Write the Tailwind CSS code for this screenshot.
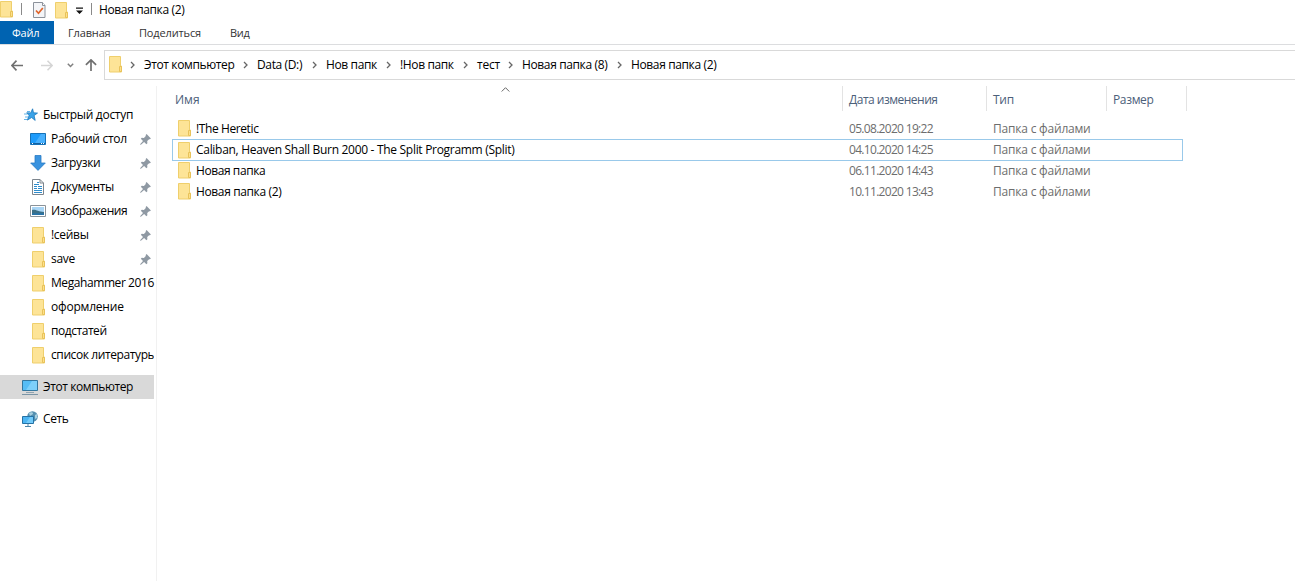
<!DOCTYPE html>
<html lang="ru">
<head>
    <meta charset="UTF-8">
    <meta name="viewport" content="width=device-width, initial-scale=1.0">
    <title>Новая папка (2)</title>
    <script src="https://cdn.jsdelivr.net/npm/@tailwindcss/browser@4"></script>
</head>
<body class="h-screen overflow-hidden bg-white font-['Open_Sans','Noto_Sans',sans-serif] text-[12px] leading-4 text-black flex flex-col whitespace-nowrap">

    <!-- Shared icons -->
    <svg class="hidden">
        <symbol id="folder" viewBox="0 0 14 17">
            <path d="M.5.5h11v9.500h1v6H.5z" fill="#fde497" stroke="#efcf6c"/>
            <path d="M10.500 15.500v-5h2v5z" fill="#fde08a" stroke="#e8c25a"/>
        </symbol>
        <symbol id="pin" viewBox="0 0 11 11">
            <path d="M6.600.1l4.300 4.300-1 .9-.8-.1-1.900 1.900.2 2.200-1 1L4.100 8 .9 10.800l-.7-.1.100-.7L3 7 .8 4.800l1-1 2.100.2 1.900-2-.1-.9z" fill="#8f99a3"/>
        </symbol>
        <symbol id="chevron" viewBox="0 0 5 8">
            <path d="M1 1l3 3-3 3" fill="none" stroke="#666" stroke-width="1.3"/>
        </symbol>
    </svg>

    <!-- Title bar -->
    <div class="h-[21px] shrink-0 flex items-start">
        <svg class="w-[14px] h-[17px] mt-px"><use href="#folder"/></svg>
        <div class="w-px h-3 bg-[#8a8a8a] ml-[7px] mt-[3px]"></div>
        <svg class="w-[13px] h-[16px] ml-[11px] mt-[2px]" viewBox="0 0 13 16">
            <path d="M.5.5h9l2.500 3v12H.5z" fill="#f4f5f8" stroke="#8c929b"/>
            <path d="M9.500.5v3H12" fill="#fff" stroke="#8c929b"/>
            <path d="M3 8.500l2.500 2.800L9.800 6" fill="none" stroke="#e0652b" stroke-width="1.700"/>
        </svg>
        <svg class="w-[14px] h-[17px] ml-[9px] mt-[2px]"><use href="#folder"/></svg>
        <svg class="w-[7px] h-[7px] ml-[7px] mt-[7px]" viewBox="0 0 7 7">
            <path d="M0 0.500h7v1.300H0zM0 3.500h7L3.500 7z" fill="#111"/>
        </svg>
        <div class="w-px h-3 bg-[#8a8a8a] ml-2 mt-[3px]"></div>
        <span class="ml-[7px] mt-[2px] tracking-[-0.37px]">Новая папка (2)</span>
    </div>

    <!-- Ribbon tabs -->
    <div class="h-6 shrink-0 flex items-center border-b border-[#dcdddf] text-[11px] text-[#333]">
        <div class="w-[54px] h-[23px] bg-[#0063b1] text-white flex items-center pl-3 tracking-[-0.2px]">Файл</div>
        <span class="w-[71px] ml-[14px] tracking-[-0.15px]">Главная</span>
        <span class="w-[91px] tracking-[-0.15px]">Поделиться</span>
        <span class="tracking-[-0.3px]">Вид</span>
    </div>

    <!-- Address row -->
    <div class="h-[35px] shrink-0 flex pt-[5px]">
        <div class="w-[104px] flex items-center">
            <svg class="w-3 h-[11px] ml-[11px]" viewBox="0 0 12 11">
                <path d="M5.500.7L.9 5.500l4.600 4.800M1 5.500h11" fill="none" stroke="#707070" stroke-width="1.700"/>
            </svg>
            <svg class="w-3 h-[11px] ml-[18px]" viewBox="0 0 12 11">
                <path d="M6.500.7l4.600 4.800-4.600 4.800M11 5.500H0" fill="none" stroke="#d5d5d5" stroke-width="1.500"/>
            </svg>
            <svg class="w-[7px] h-[5px] ml-[14px]" viewBox="0 0 7 5">
                <path d="M.8.8l2.700 2.700L6.200.8" fill="none" stroke="#808080" stroke-width="1.500"/>
            </svg>
            <svg class="w-3 h-3 ml-[11px]" viewBox="0 0 12 12">
                <path d="M.9 5.900L6 .9l5.100 5M6 1v11" fill="none" stroke="#707070" stroke-width="1.700"/>
            </svg>
        </div>
        <div class="flex-1 flex items-center border border-r-0 border-[#d9d9d9] tracking-[-0.37px]">
            <svg class="w-[14px] h-[17px] ml-1 mb-px"><use href="#folder"/></svg>
            <svg class="w-[5px] h-2 ml-[7px] mr-[9px]"><use href="#chevron"/></svg>
            <span class="w-[99px]">Этот компьютер</span>
            <svg class="w-[5px] h-2 mr-[9px]"><use href="#chevron"/></svg>
            <span class="w-[55px]">Data (D:)</span>
            <svg class="w-[5px] h-2 mr-[9px]"><use href="#chevron"/></svg>
            <span class="w-[60px]">Нов папк</span>
            <svg class="w-[5px] h-2 mr-[9px]"><use href="#chevron"/></svg>
            <span class="w-[63px]">!Нов папк</span>
            <svg class="w-[5px] h-2 mr-[9px]"><use href="#chevron"/></svg>
            <span class="w-[31px] tracking-[-0.2px]">тест</span>
            <svg class="w-[5px] h-2 mr-[9px]"><use href="#chevron"/></svg>
            <span class="w-[95px]">Новая папка (8)</span>
            <svg class="w-[5px] h-2 mr-[9px]"><use href="#chevron"/></svg>
            <span>Новая папка (2)</span>
        </div>
    </div>

    <div class="flex-1 min-h-0 flex pt-[6px]">
        <!-- Navigation pane -->
        <nav class="w-[157px] shrink-0 border-r border-[#f1f1f1] pt-[17px] pr-[2px] tracking-[-0.3px]">
            <div class="h-6 flex items-center pl-[24px] gap-[5px]">
                <svg class="w-[14px] h-[14px]" viewBox="0 0 14 14">
                    <path d="M8.600.8l.9 4 4 .3-3.400 2.500 1.100 4.800-3.600-2.900-4.200 2.600 1.700-4.500-2.400-2.800 4 .1z" fill="#3ba3e8" stroke="#1b78bd" stroke-width=".8"/>
                    <path d="M3 3.500h3M0 6h3M1 9h3M0 11.500h3" stroke="#63b4e8"/>
                </svg>
                <span>Быстрый доступ</span>
            </div>
            <div class="h-6 flex items-center pl-[30px]">
                <svg class="w-4 h-3 mr-[5px]" viewBox="0 0 16 12">
                    <path d="M.5.5h15v11H.5z" fill="#1d9bfb" stroke="#1672b8"/>
                    <path d="M11 1h4v9H5z" fill="#48b0fd"/>
                    <path d="M1 10.500h14" stroke="#135f9e"/>
                    <path d="M2 10.500h1M11 10.500h1M13 10.500h1" stroke="#fff"/>
                </svg>
                <span class="w-[89px]">Рабочий стол</span>
                <svg class="w-[11px] h-[11px]"><use href="#pin"/></svg>
            </div>
            <div class="h-6 flex items-center pl-[30px]">
                <svg class="w-4 h-4 mr-[5px]" viewBox="0 0 16 16">
                    <path d="M5 .5h6V8h4.300L8 15.400.7 8H5z" fill="#3a93df" stroke="#2a7bc4" stroke-width=".8"/>
                </svg>
                <span class="w-[89px]">Загрузки</span>
                <svg class="w-[11px] h-[11px]"><use href="#pin"/></svg>
            </div>
            <div class="h-6 flex items-center pl-[32px]">
                <svg class="w-3 h-4 mr-[7px]" viewBox="0 0 12 16">
                    <path d="M.5.5H8L11.500 4v11.500H.5z" fill="#fff" stroke="#7d858d"/>
                    <path d="M8 .5V4h3.500" fill="none" stroke="#7d858d"/>
                    <path d="M5 3.500h2M2 5.500h5M2 7.500h3M6 7.500h4M2 9.500h3M6 9.500h4M2 11.500h8M2 13.500h8" stroke="#2f8ccc"/>
                </svg>
                <span class="w-[89px]">Документы</span>
                <svg class="w-[11px] h-[11px]"><use href="#pin"/></svg>
            </div>
            <div class="h-6 flex items-center pl-[30px]">
                <svg class="w-4 h-3 mr-[5px]" viewBox="0 0 16 12">
                    <path d="M.5.5h15v11H.5z" fill="#fff" stroke="#8a9299"/>
                    <path d="M2 2h12v8H2z" fill="#a9d5f5"/>
                    <path d="M2 5c4-1 6 2 12 2v3H2z" fill="#3b6f86"/>
                    <path d="M2 8.500c4 0 8-.5 12 0V10H2z" fill="#2873a8"/>
                </svg>
                <span class="w-[89px] tracking-[-0.4px]">Изображения</span>
                <svg class="w-[11px] h-[11px]"><use href="#pin"/></svg>
            </div>
            <div class="h-6 flex items-center pl-[32px]">
                <svg class="w-[14px] h-[17px] mr-[5px]"><use href="#folder"/></svg>
                <span class="w-[89px]">!сейвы</span>
                <svg class="w-[11px] h-[11px]"><use href="#pin"/></svg>
            </div>
            <div class="h-6 flex items-center pl-[32px]">
                <svg class="w-[14px] h-[17px] mr-[5px]"><use href="#folder"/></svg>
                <span class="w-[89px]">save</span>
                <svg class="w-[11px] h-[11px]"><use href="#pin"/></svg>
            </div>
            <div class="h-6 flex items-center pl-[32px]">
                <svg class="w-[14px] h-[17px] mr-[5px] shrink-0"><use href="#folder"/></svg>
                <span class="tracking-[-0.42px]">Megahammer 2016</span>
            </div>
            <div class="h-6 flex items-center pl-[32px]">
                <svg class="w-[14px] h-[17px] mr-[5px]"><use href="#folder"/></svg>
                <span class="tracking-[-0.2px]">оформление</span>
            </div>
            <div class="h-6 flex items-center pl-[32px]">
                <svg class="w-[14px] h-[17px] mr-[5px]"><use href="#folder"/></svg>
                <span class="tracking-[-0.45px]">подстатей</span>
            </div>
            <div class="h-6 flex items-center pl-[32px]">
                <svg class="w-[14px] h-[17px] mr-[5px] shrink-0"><use href="#folder"/></svg>
                <span class="w-[103px] overflow-hidden tracking-[-0.4px]">список литературы</span>
            </div>
            <div class="h-6 mt-2 flex items-center pl-[22px] bg-[#d9d9d9]">
                <svg class="w-4 h-[15px] mr-[5px]" viewBox="0 0 16 15">
                    <path d="M.5.500h15v10H.5z" fill="#56bdf5" stroke="#33779f"/>
                    <path d="M10 1h5v9H4z" fill="#7dd0fa"/>
                    <path d="M4 12.500h8" stroke="#8fa3b0"/>
                    <path d="M0 14.500h16" stroke="#7b95a6"/>
                </svg>
                <span class="tracking-[-0.4px]">Этот компьютер</span>
            </div>
            <div class="h-6 mt-2 flex items-center pl-[22px]">
                <svg class="w-4 h-4 mr-[5px]" viewBox="0 0 16 16">
                    <circle cx="10.500" cy="5.500" r="5.300" fill="#5590b0"/>
                    <path d="M7 2.500c2-2 4-1 4 0S9 4 8 5zM13 4l2-1v4l-2 1z" fill="#a9d0e0"/>
                    <path d="M.5 5.500h11v7H.5z" fill="#4db5f2" stroke="#2572a5"/>
                    <path d="M8 6h3v6H4z" fill="#73cbfa"/>
                    <path d="M6 13v2M3 15.500h6" stroke="#4f86a8"/>
                </svg>
                <span class="tracking-[-0.4px]">Сеть</span>
            </div>
        </nav>

        <!-- File list -->
        <main class="flex-1 pl-[15px]">
            <div class="relative h-[25px] flex items-center text-[#4c607a]">
                <svg class="absolute left-[329px] top-px w-[9px] h-[5px]" viewBox="0 0 9 5">
                    <path d="M.7 4.500l3.800-3.800 3.800 3.800" fill="none" stroke="#666"/>
                </svg>
                <div class="w-[670px] pl-[3px] pt-[3px]">Имя</div>
                <div class="w-[144px] h-full border-l border-[#e3e3e3] pl-[6px] pt-[6px] tracking-[-0.5px]">Дата изменения</div>
                <div class="w-[120px] h-full border-l border-[#e3e3e3] pl-[6px] pt-[6px] tracking-[-0.3px]">Тип</div>
                <div class="w-[81px] h-full border-x border-[#e3e3e3] pl-[6px] pt-[6px] tracking-[-0.35px]">Размер</div>
            </div>
            <div class="w-[1011px] mt-[7px] text-[#6d6d6d] tracking-[-0.2px]">
                <div class="h-[21px] flex items-center pl-[6px]">
                    <svg class="w-[14px] h-[17px] mr-1"><use href="#folder"/></svg>
                    <span class="w-[653px] text-black tracking-[-0.4px]">!The Heretic</span>
                    <span class="w-[144px] tracking-[-0.69px]">05.08.2020 19:22</span>
                    <span>Папка с файлами</span>
                </div>
                <div class="h-[22px] -mb-px flex items-center pl-[5px] border border-[#99c9ea]">
                    <svg class="w-[14px] h-[17px] mr-1"><use href="#folder"/></svg>
                    <span class="w-[653px] text-black tracking-[-0.3px]">Caliban, Heaven Shall Burn 2000 - The Split Programm (Split)</span>
                    <span class="w-[144px] tracking-[-0.69px]">04.10.2020 14:25</span>
                    <span>Папка с файлами</span>
                </div>
                <div class="h-[21px] flex items-center pl-[6px]">
                    <svg class="w-[14px] h-[17px] mr-1"><use href="#folder"/></svg>
                    <span class="w-[653px] text-black tracking-[-0.42px]">Новая папка</span>
                    <span class="w-[144px] tracking-[-0.69px]">06.11.2020 14:43</span>
                    <span>Папка с файлами</span>
                </div>
                <div class="h-[21px] flex items-center pl-[6px]">
                    <svg class="w-[14px] h-[17px] mr-1"><use href="#folder"/></svg>
                    <span class="w-[653px] text-black tracking-[-0.37px]">Новая папка (2)</span>
                    <span class="w-[144px] tracking-[-0.69px]">10.11.2020 13:43</span>
                    <span>Папка с файлами</span>
                </div>
            </div>
        </main>
    </div>
</body>
</html>
